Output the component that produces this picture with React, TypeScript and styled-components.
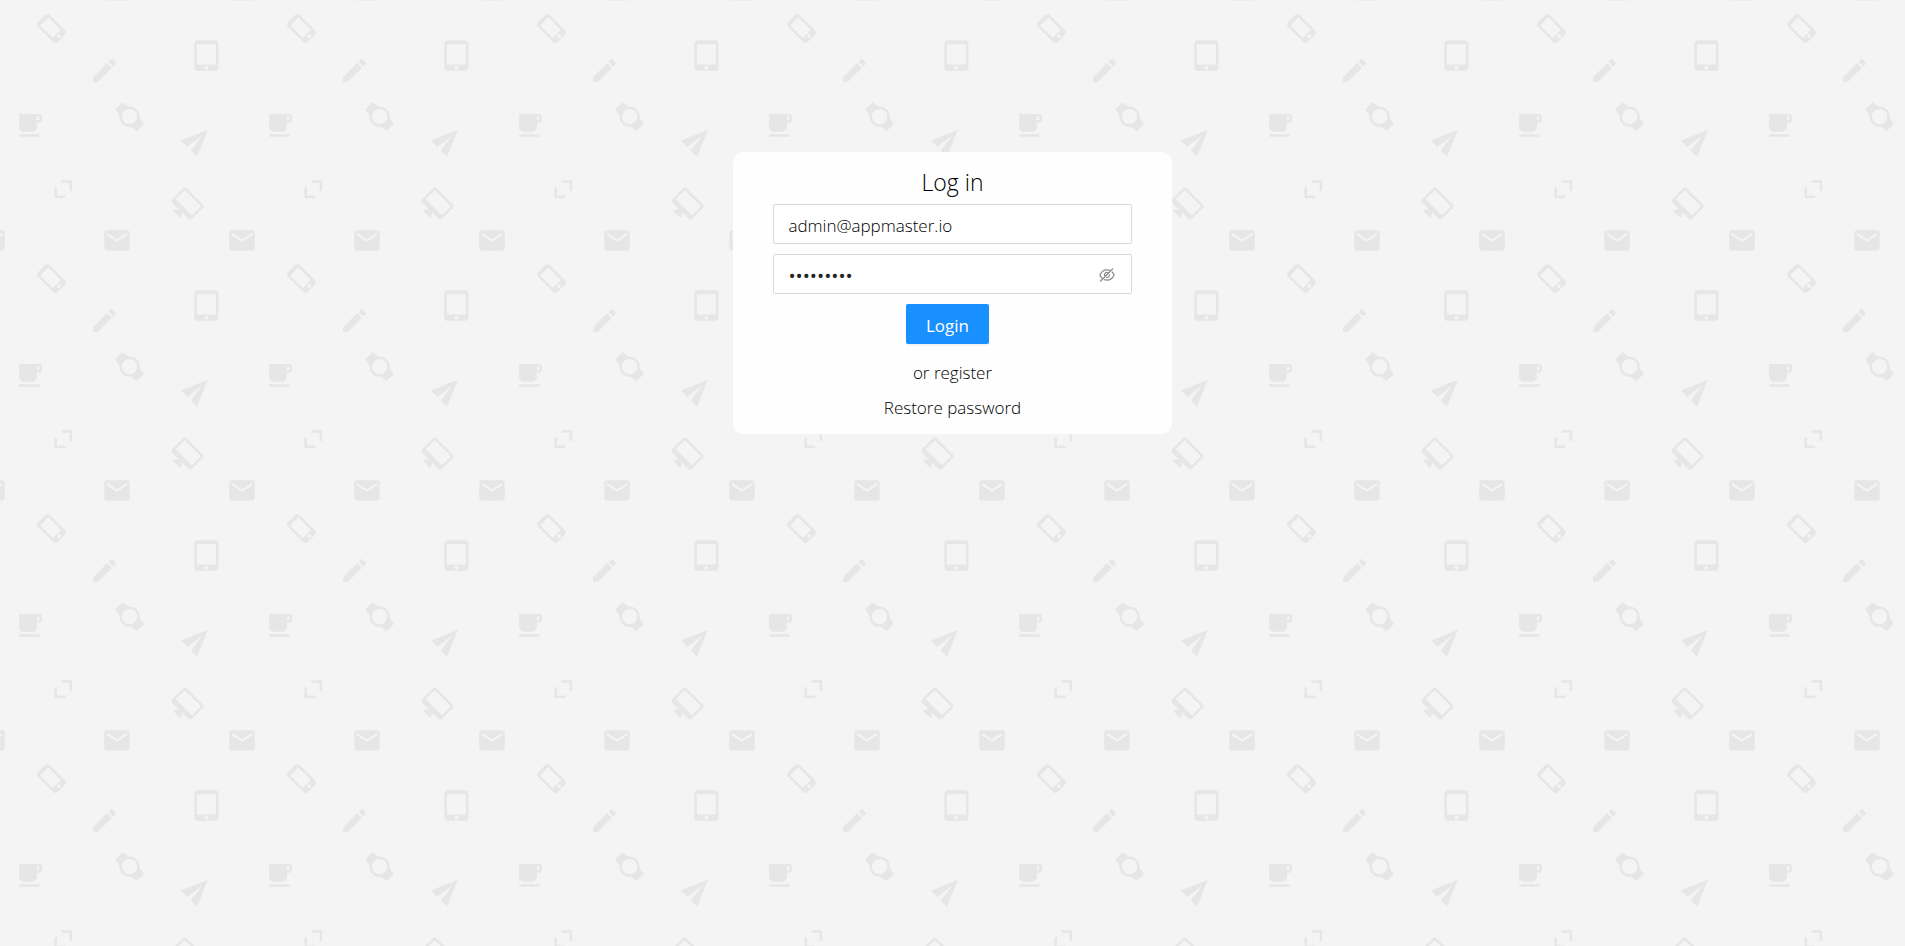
import React, { useId, useState } from "react";
import styled, { createGlobalStyle } from "styled-components";
import { AiOutlineEye, AiOutlineEyeInvisible } from "react-icons/ai";

const GlobalStyle = createGlobalStyle`
  *, *::before, *::after { box-sizing: border-box; }
  body {
    margin: 0;
    background: #f4f4f4;
    color: #000;
    font-family: "Segoe UI", "Open Sans", "Noto Sans", sans-serif;
    font-size: 17px;
    font-weight: 300;
    line-height: 24px;
  }
`;

const Page = styled.main`
  position: relative;
  display: flex;
  justify-content: center;
  align-items: flex-start;
  min-height: 100vh;
  padding: 152px 0 32px;
`;

const Backdrop = styled.svg`
  position: absolute;
  inset: 0;
  width: 100%;
  height: 100%;
  fill: #e6e6e6;
`;

const Card = styled.form`
  position: relative;
  display: flex;
  flex-direction: column;
  align-items: center;
  gap: 10px;
  width: 23%;
  min-width: 320px;
  padding: 14px 40px;
  border-radius: 10px;
  background: #fefefe;
`;

const Title = styled.h1`
  margin: 0 0 -4px;
  font-size: 23px;
  font-weight: 300;
  line-height: 32px;
`;

const Field = styled.div`
  display: flex;
  align-items: center;
  width: 100%;
  height: 40px;
  padding: 1px 15px 0 14px;
  border: 1px solid #d9d9d9;
  border-radius: 2px;
  background: #fff;
`;

const Input = styled.input`
  flex: 1;
  min-width: 0;
  padding: 2px 0 0;
  border: 0;
  outline: 0;
  background: transparent;
  color: inherit;
  font: inherit;

  &[type="password"] {
    color: #262626;
    font-size: 19px;
    font-weight: 400;
  }
`;

const ToggleButton = styled.button`
  display: flex;
  padding: 0;
  border: 0;
  background: none;
  color: #8c8c8c;
  font-size: 18px;
  cursor: pointer;
`;

const LoginButton = styled.button`
  height: 40px;
  margin-right: 10px;
  padding: 3px 20px 0;
  border: 0;
  border-radius: 2px;
  background: #1890ff;
  box-shadow: 0 2px 0 rgba(0, 0, 0, 0.043);
  color: #fff;
  font: inherit;
  font-weight: 400;
  cursor: pointer;
`;

const Links = styled.nav`
  display: flex;
  flex-direction: column;
  align-items: center;
  gap: 11px;
  margin-top: 7px;
`;

const TextLink = styled.a`
  color: inherit;
  text-decoration: none;
`;

const mail =
  "M20 4H4c-1.1 0-2 .9-2 2v12c0 1.1.9 2 2 2h16c1.1 0 2-.9 2-2V6c0-1.1-.9-2-2-2zm0 4l-8 5-8-5V6l8 5 8-5v2z";

type Glyph = { x: number; y: number; turn?: number; d: string };

/* x and y are the centre of each 24-unit glyph inside the 250px tile */
const glyphs: Glyph[] = [
  {
    x: 51.9, y: 28.1, turn: -45,
    d: "M15.5 1h-8C6.12 1 5 2.12 5 3.5v17C5 21.88 6.12 23 7.5 23h8c1.38 0 2.5-1.12 2.5-2.5v-17C18 2.12 16.88 1 15.5 1zm-4 21c-.83 0-1.5-.67-1.5-1.5s.67-1.5 1.5-1.5 1.5.67 1.5 1.5-.67 1.5-1.5 1.5zm4.5-4H7V4h9v14z",
  },
  {
    x: 207, y: 55.6,
    d: "M18.5 0h-14C3.12 0 2 1.12 2 2.5v19C2 22.88 3.12 24 4.5 24h14c1.38 0 2.5-1.12 2.5-2.5v-19C21 1.12 19.88 0 18.5 0zm-7 23c-.83 0-1.5-.67-1.5-1.5s.67-1.5 1.5-1.5 1.5.67 1.5 1.5-.67 1.5-1.5 1.5zm7.5-4H4V3h15v16z",
  },
  {
    x: 104.5, y: 70.5,
    d: "M3 17.25V21h3.75L17.81 9.94l-3.75-3.75L3 17.25zM20.71 7.04c.39-.39.39-1.02 0-1.41l-2.34-2.34c-.39-.39-1.02-.39-1.41 0l-1.83 1.83 3.75 3.75 1.83-1.83z",
  },
  {
    x: 29.3, y: 125.4,
    d: "M20 3H4v10c0 2.21 1.79 4 4 4h6c2.21 0 4-1.79 4-4v-3h2c1.11 0 2-.89 2-2V5c0-1.11-.89-2-2-2zm0 5h-2V5h2v3zM4 19h16v2H4z",
  },
  {
    x: 129.6, y: 116.7, turn: -45,
    d: "M20 12c0-2.54-1.19-4.81-3.04-6.27L16 0H8l-.95 5.73C5.19 7.19 4 9.45 4 12s1.19 4.81 3.05 6.27L8 24h8l.96-5.73C18.81 16.81 20 14.54 20 12zM6 12c0-3.31 2.69-6 6-6s6 2.69 6 6-2.69 6-6 6-6-2.69-6-6z",
  },
  { x: 198, y: 139.7, turn: -45, d: "M2.01 21L23 12 2.01 3 2 10l15 2-15 2z" },
  { x: 63.3, y: 189.2, d: "M10.5 5h8.5v8.5h-2V7h-6.5zM5 10.5h2V17h6.5v2H5z" },
  {
    x: 185.7, y: 205.4, turn: 45,
    d: "M21 2H3c-1.1 0-2 .9-2 2v12c0 1.1.9 2 2 2h7l-2 3v1h8v-1l-2-3h7c1.1 0 2-.9 2-2V4c0-1.1-.9-2-2-2zm0 12H3V4h18v10z",
  },
  { x: 117, y: 240.4, d: mail },
  { x: 117, y: -9.6, d: mail },
  { x: 242, y: 240.4, d: mail },
  { x: 242, y: -9.6, d: mail },
  { x: -8, y: 240.4, d: mail },
  { x: -8, y: -9.6, d: mail },
];

function PatternBackdrop() {
  const id = useId();
  return (
    <Backdrop aria-hidden="true">
      <defs>
        <pattern id={id} width="250" height="250" patternUnits="userSpaceOnUse">
          {glyphs.map(({ x, y, turn = 0, d }) => (
            <path
              key={`${x},${y}`}
              d={d}
              transform={`translate(${x} ${y}) rotate(${turn}) scale(1.27) translate(-12 -12)`}
            />
          ))}
        </pattern>
      </defs>
      <rect width="100%" height="100%" fill={`url(#${id})`} />
    </Backdrop>
  );
}

export default function App() {
  const [email, setEmail] = useState("admin@appmaster.io");
  const [password, setPassword] = useState("appmaster");
  const [visible, setVisible] = useState(false);

  return (
    <>
      <GlobalStyle />
      <Page>
        <PatternBackdrop />
        <Card onSubmit={(event) => event.preventDefault()}>
          <Title>Log in</Title>
          <Field>
            <Input
              type="email"
              aria-label="Email"
              value={email}
              onChange={(event) => setEmail(event.target.value)}
            />
          </Field>
          <Field>
            <Input
              type={visible ? "text" : "password"}
              aria-label="Password"
              value={password}
              onChange={(event) => setPassword(event.target.value)}
            />
            <ToggleButton
              type="button"
              aria-label={visible ? "Hide password" : "Show password"}
              onClick={() => setVisible(!visible)}
            >
              {visible ? <AiOutlineEye /> : <AiOutlineEyeInvisible />}
            </ToggleButton>
          </Field>
          <LoginButton type="submit">Login</LoginButton>
          <Links>
            <TextLink href="#register">or register</TextLink>
            <TextLink href="#restore">Restore password</TextLink>
          </Links>
        </Card>
      </Page>
    </>
  );
}
